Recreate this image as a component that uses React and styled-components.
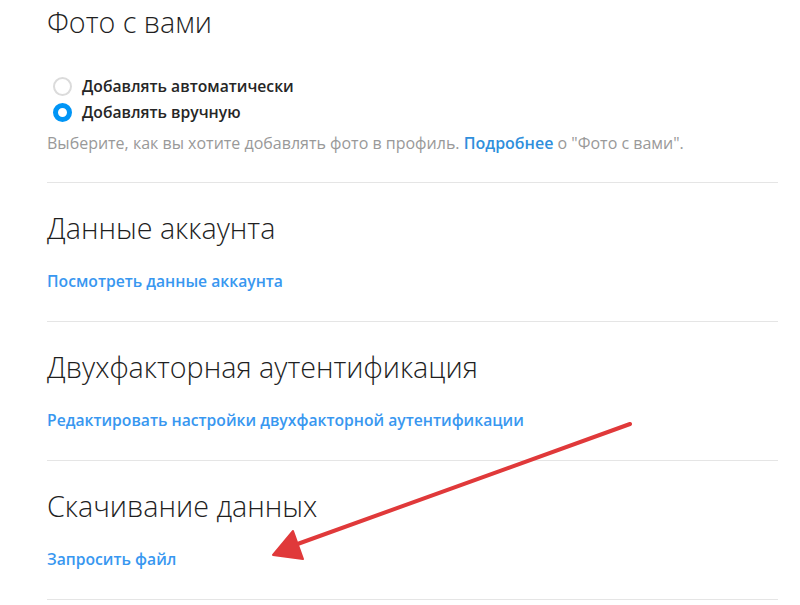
import React from 'react';
import styled, { createGlobalStyle } from 'styled-components';

const GlobalStyle = createGlobalStyle`
  body {
    margin: 0;
    background: #ffffff;
    font-family: 'Open Sans', 'Noto Sans', sans-serif;
    color: #262626;
  }
`;

const Page = styled.div`
  position: relative;
  width: 800px;
  height: 605px;
  overflow: hidden;
  padding-left: 47px;
  box-sizing: border-box;
`;

const Column = styled.div`
  width: 731px;
`;

const Section = styled.section`
  padding: ${p => (p.first ? '4px 0 29px' : '27px 0 30px')};
  border-bottom: 1px solid #e5e5e5;
`;

const Heading = styled.h2`
  margin: 0;
  font-size: 28.7px;
  font-weight: 300;
  line-height: 36px;
  color: #1f1f1f;
`;

const RadioGroup = styled.div`
  display: flex;
  flex-direction: column;
  gap: 6px;
  margin-top: 36px;
`;

const RadioRow = styled.label`
  display: flex;
  align-items: center;
  gap: 10px;
  font-size: 15.7px;
  font-weight: 600;
  line-height: 20px;
  color: #262626;
`;

const RadioDot = styled.span`
  width: 19px;
  height: 19px;
  border-radius: 50%;
  box-sizing: border-box;
  margin-left: 6px;
  border: ${p => (p.checked ? '5px solid #0095f6' : '2px solid #dbdbdb')};
  background: #ffffff;
`;

const Hint = styled.p`
  margin: 11px 0 0;
  font-size: 16px;
  line-height: 20px;
  color: #999999;
`;

const HintLink = styled.a`
  color: #2f8fdc;
  font-weight: 600;
  text-decoration: none;
`;

const Link = styled.a`
  display: block;
  margin-top: 25px;
  font-size: 15.7px;
  font-weight: 600;
  line-height: 20px;
  color: #3897f0;
  text-decoration: none;
`;

const Arrow = styled.svg`
  position: absolute;
  left: 0;
  top: 0;
  pointer-events: none;
`;

const sections = [
  { title: 'Данные аккаунта', link: 'Посмотреть данные аккаунта' },
  { title: 'Двухфакторная аутентификация', link: 'Редактировать настройки двухфакторной аутентификации' },
  { title: 'Скачивание данных', link: 'Запросить файл' },
];

export default function App() {
  return (
    <>
      <GlobalStyle />
      <Page>
        <Column>
          <Section first>
            <Heading>Фото с вами</Heading>
            <RadioGroup>
              <RadioRow><RadioDot />Добавлять автоматически</RadioRow>
              <RadioRow><RadioDot checked />Добавлять вручную</RadioRow>
            </RadioGroup>
            <Hint>
              Выберите, как вы хотите добавлять фото в профиль. <HintLink>Подробнее</HintLink> о "Фото с вами".
            </Hint>
          </Section>
          {sections.map(s => (
            <Section key={s.title}>
              <Heading>{s.title}</Heading>
              <Link>{s.link}</Link>
            </Section>
          ))}
        </Column>
        <Arrow width="800" height="605" viewBox="0 0 800 605">
          <path d="M630 424 L292 546" stroke="#e0393a" strokeWidth="4" strokeLinecap="round" fill="none" />
          <path d="M273 555 L293 531 L303 559 Z" fill="#e0393a" stroke="#e0393a" strokeWidth="2" strokeLinejoin="round" />
        </Arrow>
      </Page>
    </>
  );
}
